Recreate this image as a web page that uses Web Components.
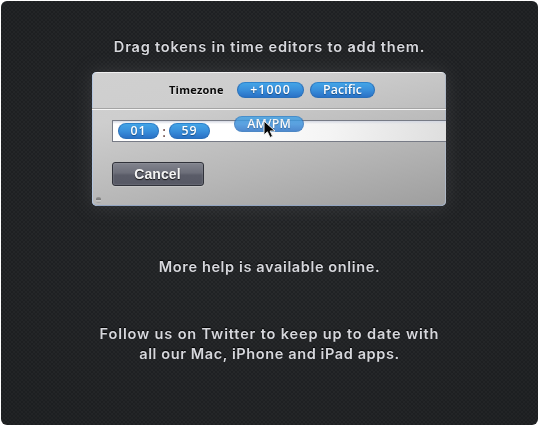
<!DOCTYPE html>
<html lang="en"><head><meta charset="utf-8"><title>Time tokens</title>
<style>html,body{margin:0;background:#fff}body{width:539px;height:426px;overflow:hidden}</style></head>
<body><help-screen></help-screen>
<script>
function define(name, html) {
  customElements.define(name, class extends HTMLElement {
    constructor() {
      super();
      const t = document.createElement('template');
      t.innerHTML = html;
      this.attachShadow({mode: 'open'}).append(t.content.cloneNode(true));
    }
  });
}
define('help-line', `<style>
:host{display:block;height:20px;line-height:20px;white-space:nowrap;text-align:center;font:600 14px/20px Inter,"Open Sans",sans-serif;letter-spacing:var(--track,.5px);color:#d6d7dc;text-shadow:0 -1px 1px #000;transform:scaleX(1.04)}
</style><slot></slot>`);
define('time-token', `<style>
:host{display:flex;flex:none;box-sizing:border-box;width:var(--w,67px);height:16px;align-items:center;justify-content:center;border-radius:8px;border:1px solid #286fb9;border-top-color:#2c82cc;background:linear-gradient(#43a4e6,#398fdb 50%,#2a71c6);color:#fff;font:600 12.3px/14px "Open Sans","Noto Sans",sans-serif;letter-spacing:var(--ls,.1px);text-shadow:0 1px 1px #174e83}
</style><slot></slot>`);
define('cancel-button', `<style>
:host{display:block}
button{display:block;box-sizing:border-box;width:92px;height:24px;margin:0;padding:0 1px 1px 0;border:1px solid #30323a;border-radius:3px;background:linear-gradient(#82848e,#6c6e79 45%,#5a5c68 55%,#565864);box-shadow:inset 0 1px #898b94,inset 0 0 2px #8b8d96,0 1px #c5c5c5;color:#f4f4f4;font:bold 14px/20px "Liberation Sans",Arial,sans-serif;letter-spacing:.1px;text-shadow:0 1px 1px #111}
</style><button><slot></slot></button>`);
define('time-field', `<style>
:host{display:flex;box-sizing:border-box;height:22px;width:334px;align-items:center;padding:0 5px;border:1px solid #777b86;border-right:0;background:linear-gradient(#d4d8e3,transparent 3px),linear-gradient(100deg,#fff 35%,#f4f4f4 65%,#dedede)}
i{width:10px;text-align:center;font:normal 14px/16px "Open Sans",sans-serif;color:#5a3430;padding-top:2px}
</style><slot name="hour"></slot><i>:</i><slot name="minute"></slot>`);
define('token-editor', `<style>
:host{display:block;position:relative;box-sizing:border-box;width:354px;height:134px;border-radius:5px;overflow:hidden;background:linear-gradient(168deg,#d0d0d0 0%,#cecece 25%,#b6b6b6 65%,#9e9e9e 100%);box-shadow:inset 1px 0 #b4c6df,inset -1px 0 #aeb7c4,inset 0 -1px #93a5c1,inset 0 1px #f0f0f0}
.tools{display:flex;box-sizing:border-box;height:37px;align-items:center;gap:6px;padding:0 0 1px 77px;border-bottom:1px solid #a4a4a4;box-shadow:0 1px #f5f5f5}
.label{width:62px;font:700 11px/16px "Open Sans","Noto Sans",sans-serif;letter-spacing:.22px;color:#090909;text-shadow:0 1px #eee}
.fields{display:grid;gap:20px;padding:11px 0 0 20px}
.drag{position:absolute;left:142px;top:44px;--w:70px;opacity:.82}
svg{position:absolute;left:171px;top:48px}
.grip{position:absolute;left:4px;top:125px;width:5px;height:6px;border-radius:2px;background:linear-gradient(#999,#777 40%,#ccc 60%,#999)}
</style>
<div class="tools"><span class="label">Timezone</span><time-token style="--ls:1.1px">+1000</time-token><time-token style="--w:65px">Pacific</time-token></div>
<div class="fields"><time-field><time-token slot="hour" style="--w:41px;--ls:.9px">01</time-token><time-token slot="minute" style="--w:41px;--ls:.9px">59</time-token></time-field><cancel-button>Cancel</cancel-button></div>
<time-token class="drag">AM/PM</time-token>
<svg width="13" height="20" viewBox="0 0 13 20"><path d="M1 1V15L4.4 11.8L7 17.5L9.6 16.3L7.1 11H12Z" fill="#050505" stroke="#eee" stroke-width="1"/></svg>
<span class="grip"></span>`);
define('help-screen', `<style>
:host{display:block;box-sizing:border-box;width:539px;height:426px;padding:1px}
main{display:flex;flex-direction:column;box-sizing:border-box;width:537px;height:424px;border-radius:6px;padding-top:36px;
background:radial-gradient(circle at 1px 1px,#15171966 0 1px,transparent 1.3px) 0 0/4px 4px,radial-gradient(circle at 1px 1px,#15171966 0 1px,transparent 1.3px) 2px 2px/4px 4px,radial-gradient(ellipse at 50% 45%,#2a2c2e,#242628 70%,#212325)}
token-editor{margin:15px 0 0 91px}
.glow{filter:drop-shadow(0 0 9px #65676955)}
.more{margin-top:51px}.follow{margin-top:47px}
</style><main>
<help-line style="--track:.75px">Drag tokens in time editors to add them.</help-line>
<token-editor class="glow"></token-editor>
<help-line class="more" style="--track:.58px">More help is available online.</help-line>
<div class="follow"><help-line style="--track:.8px">Follow us on Twitter to keep up to date with</help-line><help-line style="--track:.56px">all our Mac, iPhone and iPad apps.</help-line></div>
</main>`);
</script></body></html>
